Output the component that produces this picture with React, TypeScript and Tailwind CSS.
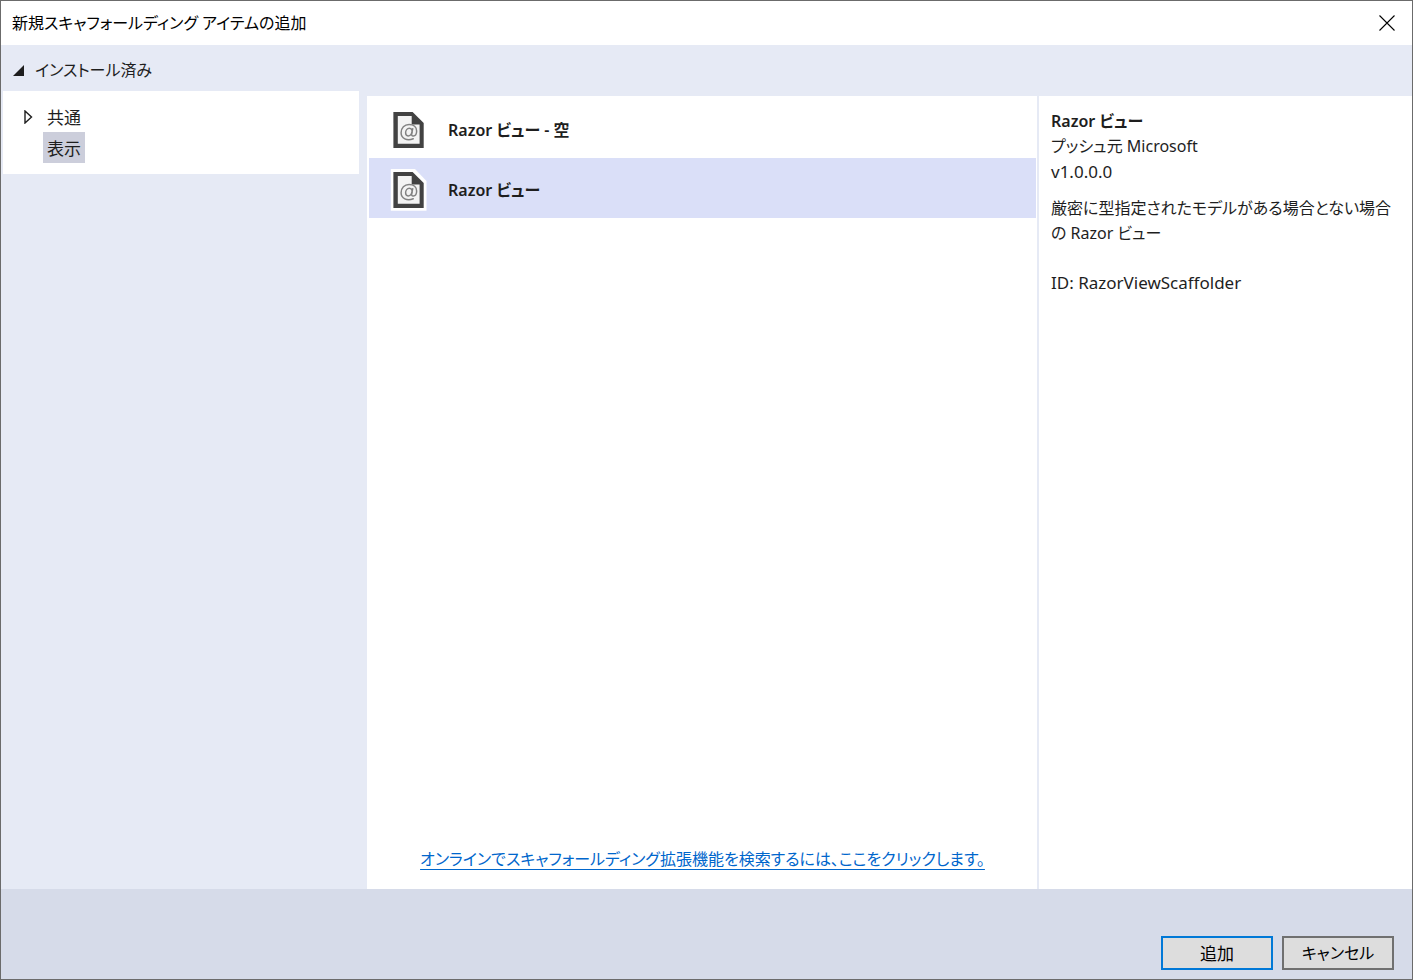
import { useState } from "react";

const categories = [
  { name: "共通", expandable: true },
  { name: "表示", expandable: false },
];

const scaffolders = ["Razor ビュー - 空", "Razor ビュー"];

function RazorFileIcon() {
  return (
    <svg width="38" height="44" viewBox="0 0 38 44" aria-hidden="true" className="shrink-0">
      <path d="M.8 1H25L36.500 13V42.800H.8Z" fill="#fff" />
      <path d="M3.400 4H22.600L33.700 15V40H3.400Z" fill="#424242" />
      <path d="M7.800 8H21.700V16.500H29.600V35.800H7.800Z" fill="#f3f3f3" />
      <g fill="none" stroke="#828282" strokeWidth="1.400" strokeLinecap="round" transform="translate(-1.400 -1.400) scale(1.050)">
        <path d="M23.500 30.600C17.500 33.200 11.900 30.300 11.900 24.900C11.900 20.200 15.100 17 19.500 17C24 17 26.700 19.700 26.700 23.300C26.700 26.200 25.200 28 23.500 28C22.100 28 21.700 27 22 25.600L23 21" />
        <path d="M22.500 22.800C22 21.300 21 20.700 19.800 20.700C17.600 20.700 16.200 22.700 16.200 25C16.200 26.800 17.100 27.900 18.600 27.900C20.200 27.900 21.700 26.500 22.200 24.500" />
      </g>
    </svg>
  );
}

export default function App() {
  const [category, setCategory] = useState("表示");
  const [selected, setSelected] = useState("Razor ビュー");

  return (
    <div className="flex min-h-screen flex-col border border-[#6b6b6b] bg-[#e6eaf5] font-['Noto_Sans','Noto_Sans_CJK_JP',sans-serif] text-[16px] leading-[25px] text-[#1e1e1e] [font-feature-settings:'palt']">
      <header className="flex h-11 items-center justify-between bg-white pl-[11px] pr-[17px] text-black">
        <h1>新規スキャフォールディング アイテムの追加</h1>
        <button type="button" aria-label="閉じる" className="flex size-4 items-center justify-center">
          <svg width="16" height="16" viewBox="0 0 16 16" aria-hidden="true">
            <path d="M.5 .5L15.500 15.500M15.500 .5L.5 15.500" stroke="#000" strokeWidth="1.1" fill="none" />
          </svg>
        </button>
      </header>

      <main className="flex flex-1">
        <nav className="flex w-[366px] shrink-0 flex-col pl-0.5 pr-2">
          <button type="button" aria-expanded="true" className="flex h-[46px] items-center gap-[11px] pl-2.5 pt-1 text-left">
            <svg width="11" height="11" viewBox="0 0 11 11" aria-hidden="true">
              <path d="M11 0V11H0Z" fill="#1e1e1e" />
            </svg>
            インストール済み
          </button>
          <ul className="bg-white pb-[11px] pt-2.5 text-[17px]">
            {categories.map((c) => (
              <li key={c.name} className="flex items-center pl-5">
                <span className="flex w-5 items-center">
                  {c.expandable && (
                    <svg width="10" height="14" viewBox="0 0 10 14" aria-hidden="true">
                      <path d="M2 1V13L8.500 7Z" fill="#fff" stroke="#1e1e1e" strokeWidth="1.4" />
                    </svg>
                  )}
                </span>
                <button
                  type="button"
                  onClick={() => setCategory(c.name)}
                  className={category === c.name ? "h-[31px] bg-[#cccedb] px-1 pt-0.5" : "h-[31px] px-1 pt-0.5"}
                >
                  {c.name}
                </button>
              </li>
            ))}
          </ul>
        </nav>

        <section className="mt-[51px] flex min-w-0 flex-1 flex-col justify-between bg-white py-0.5 pl-0.5 pr-px">
          <ul>
            {scaffolders.map((name) => (
              <li key={name}>
                <button
                  type="button"
                  onClick={() => setSelected(name)}
                  className={
                    selected === name
                      ? "flex h-[60px] w-full items-center gap-5 bg-[#dadff8] pl-[21px] pt-1 text-left font-semibold"
                      : "flex h-[60px] w-full items-center gap-5 pl-[21px] pt-1 text-left font-semibold"
                  }
                >
                  <RazorFileIcon />
                  {name}
                </button>
              </li>
            ))}
          </ul>
          <p className="pb-[15px] text-center">
            <a href="#online" className="text-[#0066cc] underline decoration-[#0066cc] decoration-1 underline-offset-4">
              オンラインでスキャフォールディング拡張機能を検索するには、ここをクリックします。
            </a>
          </p>
        </section>

        <aside className="ml-0.5 mt-[51px] w-[373px] shrink-0 bg-white px-3 pt-[13px]">
          <h2 className="font-semibold">Razor ビュー</h2>
          <p>プッシュ元 Microsoft</p>
          <p className="text-[17px]">v1.0.0.0</p>
          <p className="mt-3">厳密に型指定されたモデルがある場合とない場合の Razor ビュー</p>
          <p className="mt-6 text-[17px]">ID: RazorViewScaffolder</p>
        </aside>
      </main>

      <footer className="flex h-[90px] items-end justify-end gap-[9px] bg-[#d6dbe9] pb-[9px] pr-[18px] text-black">
        <button type="button" className="h-[34px] w-28 border-2 border-[#0078d7] bg-[#dddddd] text-[17px]">
          追加
        </button>
        <button type="button" className="h-[34px] w-28 border-2 border-[#707070] bg-[#dddddd]">
          キャンセル
        </button>
      </footer>
    </div>
  );
}
